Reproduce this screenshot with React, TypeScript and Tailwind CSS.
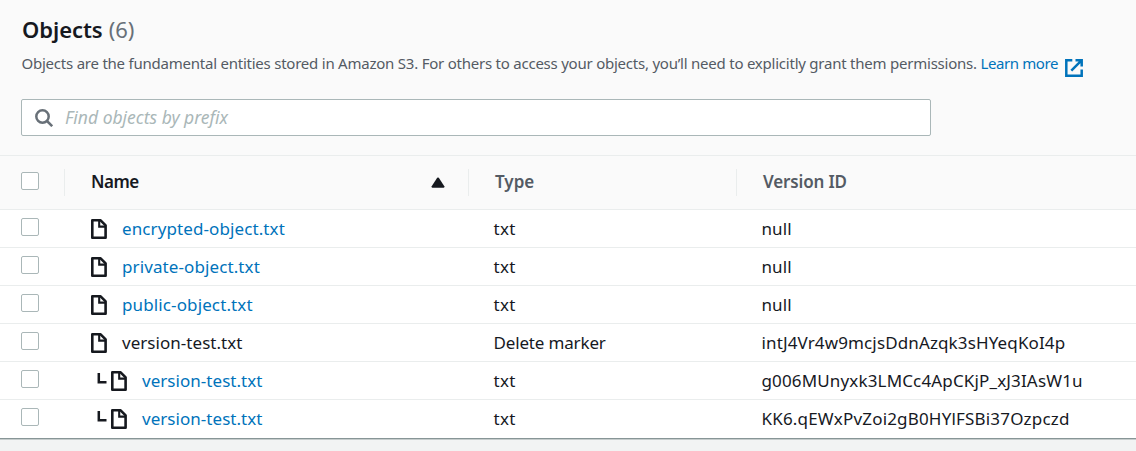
import React from "react";

type Row = { name: string; type: string; version: string; link: boolean; nested?: boolean; nameTrack: string; typeTrack: string; versionTrack: string };

const rows: Row[] = [
  { name: "encrypted-object.txt", type: "txt", version: "null", link: true, nameTrack: "tracking-[0.1px]", typeTrack: "tracking-[0.3px]", versionTrack: "tracking-[0.1px]" },
  { name: "private-object.txt", type: "txt", version: "null", link: true, nameTrack: "tracking-[0.1px]", typeTrack: "tracking-[0.3px]", versionTrack: "tracking-[0.1px]" },
  { name: "public-object.txt", type: "txt", version: "null", link: true, nameTrack: "tracking-[0.12px]", typeTrack: "tracking-[0.3px]", versionTrack: "tracking-[0.1px]" },
  { name: "version-test.txt", type: "Delete marker", version: "intJ4Vr4w9mcjsDdnAzqk3sHYeqKoI4p", link: false, nameTrack: "tracking-[0.04px]", typeTrack: "tracking-[-0.16px]", versionTrack: "tracking-[0.13px]" },
  { name: "version-test.txt", type: "txt", version: "g006MUnyxk3LMCc4ApCKjP_xJ3IAsW1u", link: true, nested: true, nameTrack: "tracking-[0.04px]", typeTrack: "tracking-[0.3px]", versionTrack: "tracking-[0.15px]" },
  { name: "version-test.txt", type: "txt", version: "KK6.qEWxPvZoi2gB0HYlFSBi37Ozpczd", link: true, nested: true, nameTrack: "tracking-[0.04px]", typeTrack: "tracking-[0.3px]", versionTrack: "tracking-[0.18px]" },
];

function Checkbox() {
  return <span role="checkbox" aria-checked="false" className="block size-[18px] rounded-[2px] border border-[#aab7b8] bg-white" />;
}

function FileIcon() {
  return (
    <svg className="h-5 w-4 shrink-0" viewBox="0 0 16 20" fill="none" stroke="#16191f" strokeWidth="2.6" strokeLinejoin="round">
      <path d="M1.3 1.3h8.3l5 5v12.4H1.3z" />
      <path d="M8.2 1.5v6.1h6" strokeWidth="2.1" strokeLinejoin="miter" />
    </svg>
  );
}

export default function App() {
  return (
    <div className="h-[451px] w-[1136px] overflow-hidden bg-[#f2f3f3] font-['Noto_Sans',sans-serif] text-[#16191f]">
      <header className="h-[156px] border-b border-[#eaeded] bg-[#fafafa] pl-[21px] pt-[13px]">
        <h1 className="h-8 whitespace-nowrap pl-px text-[22px] leading-8">
          <span className="font-semibold tracking-[-0.05px]">Objects</span>
          <span className="ml-[6px] text-[#687078]">(6)</span>
        </h1>
        <div className="mt-[6px] flex h-6 whitespace-nowrap text-[15px] leading-6 text-[#545b64]">
          <p className="w-[959.5px] pl-[0.5px] tracking-[-0.23px]">
            Objects are the fundamental entities stored in Amazon S3. For others to access your objects, you’ll need to explicitly grant them permissions.
          </p>
          <a className="flex w-[104px] text-[#0073bb]">
            <span className="w-[84.5px] tracking-[-0.4px]">Learn more</span>
            <svg className="mt-[8px] size-[18px] shrink-0" viewBox="0 0 18 18" fill="none" stroke="#0073bb" strokeWidth="2.5">
              <path d="M7.3 1.3H1.3v15.4h15.4v-6.2M10.5 1.3h6.2v6.2M16.3 1.7 6.3 11.7" />
            </svg>
          </a>
        </div>
        <div className="mt-[24px] flex h-[37px] w-[910px] items-center rounded-[2px] border border-[#aab7b8] bg-white pl-[13px]">
          <svg className="size-[18px] shrink-0" viewBox="0 0 18 18" fill="none" stroke="#687078" strokeWidth="2.5">
            <circle cx="7.5" cy="7.5" r="6.2" />
            <path d="m12 12 5.2 5.2" />
          </svg>
          <span className="ml-[12px] whitespace-nowrap text-[17.5px] italic tracking-[-0.01px] text-[#aab7b8]">Find objects by prefix</span>
        </div>
      </header>
      <div className="flex h-[54px] items-center border-b border-[#eaeded] bg-[#fafafa] text-[17px] font-semibold">
        <div className="flex h-[27px] w-[65px] border-r border-[#eaeded] pl-[21px] pt-[3px]"><Checkbox /></div>
        <div className="flex h-[27px] w-[404px] items-center border-r border-[#eaeded] pb-[2px] pl-[26px]">
          <span className="tracking-[-0.5px]">Name</span>
          <svg className="ml-auto mr-[23px] mt-[2px] h-[11px] w-[14px]" viewBox="0 0 14 11" fill="#16191f"><path d="M6.2.8Q7 0 7.8.8L13.3 9.3Q13.6 10.8 12.5 10.8H1.5Q.4 10.8.7 9.3z" /></svg>
        </div>
        <div className="flex h-[27px] w-[268px] items-center border-r border-[#eaeded] pb-[2px] pl-[26px] text-[#545b64]"><span>Type</span></div>
        <div className="pb-[2px] pl-[26px] text-[#545b64]"><span className="tracking-[-0.15px]">Version ID</span></div>
      </div>
      <div className="border-b border-[#c5cccc] bg-white text-[17px] leading-[37px]">
        {rows.map((r, i) => (
          <div key={i} className="flex h-[38px] whitespace-nowrap border-b border-[#eaeded] last:h-[39px] last:border-[#879596]">
            <div className="w-[91px] pl-[21px] pt-[8px]"><Checkbox /></div>
            <div className="flex w-[402.5px]">
              {r.nested && (
                <svg className="ml-[6px] mr-[4px] mt-[10px] h-[12px] w-[10px] shrink-0" viewBox="0 0 10 12" fill="none" stroke="#16191f" strokeWidth="2.5"><path d="M1.8 1v9.3H9.5" /></svg>
              )}
              <span className="mt-[9px] flex h-5"><FileIcon /></span>
              <span className={"ml-[15px] " + r.nameTrack + (r.link ? " text-[#0073bb]" : "")}>{r.name}</span>
            </div>
            <div className="w-[268px]"><span className={r.typeTrack}>{r.type}</span></div>
            <div><span className={r.versionTrack}>{r.version}</span></div>
          </div>
        ))}
      </div>
    </div>
  );
}
